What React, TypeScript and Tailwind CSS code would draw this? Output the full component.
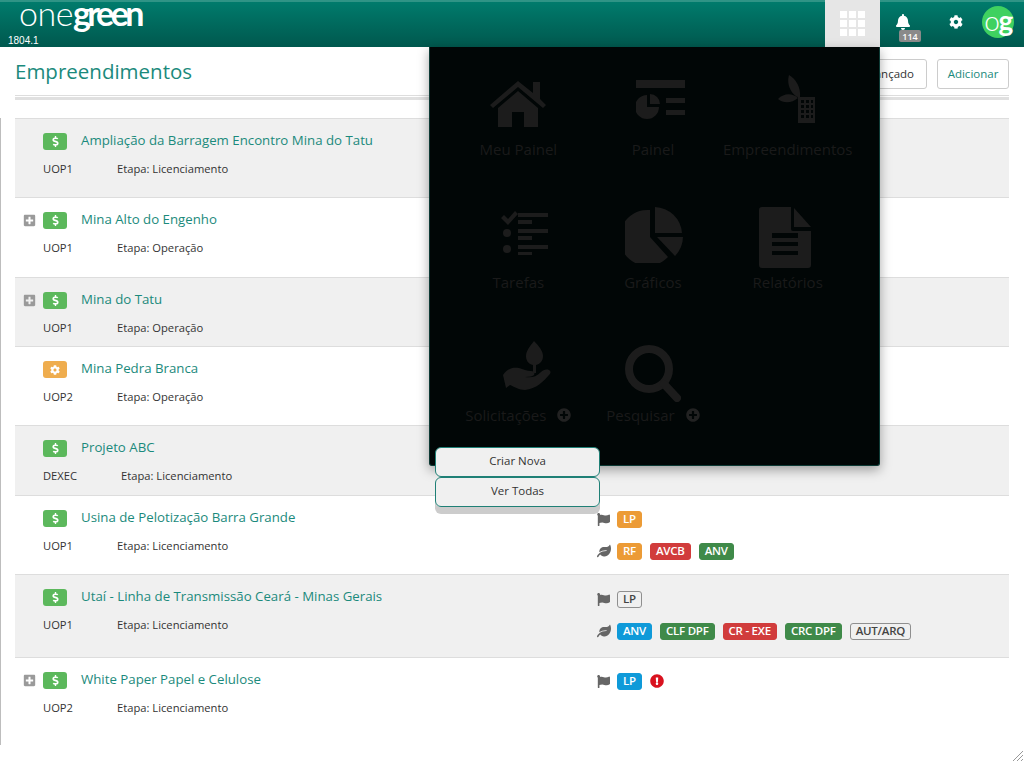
import { FaBell, FaCog, FaDollarSign, FaExclamationCircle, FaFlag, FaLeaf, FaPlusCircle, FaPlusSquare } from "react-icons/fa";

type Tag = { label: string; tone: "orange" | "red" | "green" | "blue" | "outline" };

type Row = {
  title: string;
  unit: string;
  stage: string;
  expand?: boolean;
  status?: "gear";
  height: string;
  flags?: Tag[];
  alert?: boolean;
  licenses?: Tag[];
  tall?: boolean;
};

const toneClass = {
  orange: "bg-[#ec9b36] text-white border-[#ec9b36]",
  red: "bg-[#d13c3c] text-white border-[#d13c3c]",
  green: "bg-[#3f8a49] text-white border-[#3f8a49]",
  blue: "bg-[#0f9ad9] text-white border-[#0f9ad9]",
  outline: "bg-transparent text-[#444] border-[#8f8f8f]",
};

const rows: Row[] = [
  { title: "Ampliação da Barragem Encontro Mina do Tatu", unit: "UOP1", stage: "Etapa: Licenciamento", height: "h-[79px]" },
  { title: "Mina Alto do Engenho", unit: "UOP1", stage: "Etapa: Operação", expand: true, height: "h-[80px]" },
  { title: "Mina do Tatu", unit: "UOP1", stage: "Etapa: Operação", expand: true, height: "h-[69px]" },
  { title: "Mina Pedra Branca", unit: "UOP2", stage: "Etapa: Operação", status: "gear", height: "h-[79px]" },
  { title: "Projeto ABC", unit: "DEXEC", stage: "Etapa: Licenciamento", height: "h-[70px]" },
  {
    title: "Usina de Pelotização Barra Grande",
    unit: "UOP1",
    stage: "Etapa: Licenciamento",
    height: "h-[79px]",
    flags: [{ label: "LP", tone: "orange" }],
    licenses: [
      { label: "RF", tone: "orange" },
      { label: "AVCB", tone: "red" },
      { label: "ANV", tone: "green" },
    ],
  },
  {
    title: "Utaí - Linha de Transmissão Ceará - Minas Gerais",
    unit: "UOP1",
    stage: "Etapa: Licenciamento",
    height: "h-[83px]",
    tall: true,
    flags: [{ label: "LP", tone: "outline" }],
    licenses: [
      { label: "ANV", tone: "blue" },
      { label: "CLF DPF", tone: "green" },
      { label: "CR - EXE", tone: "red" },
      { label: "CRC DPF", tone: "green" },
      { label: "AUT/ARQ", tone: "outline" },
    ],
  },
  {
    title: "White Paper Papel e Celulose",
    unit: "UOP2",
    stage: "Etapa: Licenciamento",
    expand: true,
    height: "h-[88px]",
    flags: [{ label: "LP", tone: "blue" }],
    alert: true,
  },
];

function Badge({ tag }: { tag: Tag }) {
  return (
    <span className={`flex h-[17px] items-center rounded-[3px] border px-[5px] text-[11.5px] leading-none font-semibold tracking-[-0.25px] ${toneClass[tag.tone]}`}>
      {tag.label}
    </span>
  );
}

function HomeIcon() {
  return (
    <svg viewBox="0 0 56 46" className="mt-[34px] h-[46px] w-[56px]" fill="#1c1c1c" aria-hidden="true">
      <path d="M28 0 43 12V1h7v17l6 6-3 3L28 6 3 27l-3-3z" />
      <path d="M28 10 48 27v19H34V31H22v15H8V27z" />
    </svg>
  );
}

function PanelIcon() {
  return (
    <svg viewBox="0 0 50 40" className="ml-[17px] mt-[33px] h-[40px] w-[50px]" fill="#1c1c1c" aria-hidden="true">
      <rect x="0" y="0" width="49" height="8" />
      <path d="M11 15v12h12a12 12 0 1 1-12-12z" />
      <path d="M14 14a10 10 0 0 1 10 10H14z" />
      <rect x="30" y="18" width="19" height="5" />
      <rect x="30" y="30" width="19" height="5" />
    </svg>
  );
}

function ProjectIcon() {
  return (
    <svg viewBox="0 0 38 48" className="ml-[18px] mt-[28px] h-[48px] w-[38px]" fill="#1c1c1c" aria-hidden="true">
      <path d="M11 0c7 4 12 12 11 23C14 21 8 10 11 0z" />
      <path d="M0 24c6-6 14-6 20-1-6 5-14 6-20 1z" />
      <path fillRule="evenodd" d="M20 22h17v26H20zm3 3v3h3v-3zm5 0v3h3v-3zm5 0v3h2v-3zm-10 5v3h3v-3zm5 0v3h3v-3zm5 0v3h2v-3zm-10 5v3h3v-3zm5 0v3h3v-3zm5 0v3h2v-3zm-10 5v3h3v-3zm5 0v3h3v-3zm5 0v3h2v-3z" />
    </svg>
  );
}

function TasksIcon() {
  return (
    <svg viewBox="0 0 48 44" className="ml-[14px] mt-[31px] h-[44px] w-[48px]" fill="#1c1c1c" aria-hidden="true">
      <path d="M0 7l3-3 4 4 7-8 3 3-10 11z" />
      <rect x="17" y="2" width="30" height="4" />
      <rect x="17" y="9" width="14" height="4" />
      <circle cx="6" cy="22" r="4" />
      <rect x="17" y="18" width="30" height="4" />
      <rect x="17" y="25" width="14" height="4" />
      <circle cx="6" cy="38" r="4" />
      <rect x="17" y="34" width="30" height="4" />
      <rect x="17" y="41" width="14" height="3" />
    </svg>
  );
}

function PieIcon() {
  return (
    <svg viewBox="0 0 58 56" className="ml-[2px] mt-[27px] h-[56px] w-[58px]" fill="#1c1c1c" aria-hidden="true">
      <path d="M25 3v27l18 20A28 28 0 1 1 25 3z" />
      <path d="M30 0a28 28 0 0 1 27 26H30z" />
      <path d="M32 30h26a28 28 0 0 1-8 19z" />
    </svg>
  );
}

function FileIcon() {
  return (
    <svg viewBox="0 0 52 61" className="mr-[6px] mt-[27px] h-[61px] w-[52px]" fill="#1c1c1c" aria-hidden="true">
      <path fillRule="evenodd" d="M3 0h29v22a2 2 0 0 0 2 2h18v34a3 3 0 0 1-3 3H3a3 3 0 0 1-3-3V3a3 3 0 0 1 3-3zm10 26v5h26v-5zm0 9v4h26v-4zm0 9v4h26v-4z" />
      <path d="M35 1l17 19H35z" />
    </svg>
  );
}

function SeedlingIcon() {
  return (
    <svg viewBox="0 0 48 49" className="ml-[18px] mt-[28px] h-[49px] w-[48px]" fill="#1c1c1c" aria-hidden="true">
      <path d="M31 0c5 5 9 10 9 15 0 5-3 8-7 9v8h-3v-8c-5-1-7-5-7-9 0-5 4-10 8-15z" />
      <path d="M0 34c5-7 10-8 16-7 4 1 8 3 12 3 3 0 4 2 3 4-1 1-4 2-9 2 6 1 11 0 16-5 2-2 5-3 8-2 2 1 2 3 0 5-5 6-13 14-24 15-6 0-10-3-15-5l-4 3z" />
    </svg>
  );
}

function SearchIcon() {
  return (
    <svg viewBox="0 0 56 57" className="mt-[32px] h-[57px] w-[56px]" fill="none" stroke="#1c1c1c" aria-hidden="true">
      <circle cx="24" cy="24" r="20" strokeWidth="8" />
      <path d="M39 39l13 14" strokeWidth="8" strokeLinecap="round" />
    </svg>
  );
}

function MenuTile({ icon, label, plus }: { icon: React.ReactNode; label: string; plus?: boolean }) {
  return (
    <div className="flex h-[133px] flex-col items-center">
      <div className="flex h-[92px] items-start justify-center">{icon}</div>
      <div className="flex items-center gap-[11px] text-[15px] leading-[20px] text-[#1a1a1a]">
        {label}
        {plus && <FaPlusCircle className="text-[14px] text-[#222]" />}
      </div>
    </div>
  );
}

export default function App() {
  return (
    <div className="relative h-[762px] w-[1024px] overflow-hidden bg-white font-['Open_Sans','Noto_Sans',sans-serif] text-[#333]">
      <header className="flex h-[47px] justify-between border-t-2 border-[#2f9486] bg-gradient-to-b from-[#007b6c] to-[#00584e]">
        <div className="relative w-[200px] pl-[19px]">
          <div className="mt-[1px] font-['Lato',sans-serif] text-[34px] leading-[20px] text-white">
            <span className="font-light tracking-[-0.5px]">one</span>
            <span className="font-bold tracking-[-3.5px]">green</span>
          </div>
          <span className="absolute bottom-0 left-[8px] font-['Liberation_Sans',sans-serif] text-[10px] leading-[13px] text-white">1804.1</span>
        </div>
        <div className="mt-[-2px] flex h-[47px]">
          <div className="grid h-[47px] w-[55px] grid-cols-[repeat(3,7px)] content-center justify-center gap-[2px] bg-[#e6e6e6]">
            {Array.from({ length: 9 }).map((_, i) => (
              <span key={i} className="h-[7px] w-[7px] bg-white" />
            ))}
          </div>
          <div className="relative w-[76px]">
            <FaBell className="absolute left-[15px] top-[14px] text-[16px] text-white" />
            <span className="absolute left-[19px] top-[30px] flex h-[12px] w-[22px] items-center justify-center rounded-[2px] bg-[#8a8a8a] text-[9px] font-semibold leading-none text-white">114</span>
            <FaCog className="absolute left-[69px] top-[15px] text-[14px] text-white" />
          </div>
          <div className="ml-[26px] mr-[10px] mt-[6px] flex h-[32px] w-[32px] items-center justify-center rounded-full bg-[#3fd160] pb-[4px] font-['Lato',sans-serif] text-[28px] leading-none tracking-[-1.5px] text-white">
            <span className="font-light">o</span>
            <span className="font-bold">g</span>
          </div>
        </div>
      </header>

      <div className="px-[15px]">
        <div className="flex h-[48px] items-center justify-between">
          <h1 className="text-[20.5px] leading-[30px] text-[#1b8a7c]">Empreendimentos</h1>
          <div className="mt-[5px] flex gap-[10px]">
            <button className="h-[30px] rounded-[3px] border border-[#ccc] px-[12px] pt-[1px] text-[11.5px] text-[#333]">Filtro Avançado</button>
            <button className="h-[30px] w-[72px] rounded-[3px] border border-[#ccc] pt-[1px] text-[11.5px] text-[#1b8a7c]">Adicionar</button>
          </div>
        </div>
        <div className="border-t border-[#ddd]" />
        <div className="mt-[1px] h-[3px] bg-[#e0e0e0]" />
      </div>

      <div className="ml-0 mt-[18px] border-l border-[#bdbdbd] pl-[14px] pr-[15px]">
        {rows.map((row, i) => (
          <div key={row.title} className={`flex border-t border-[#ddd] ${row.height} ${i % 2 === 0 ? "bg-[#f0f0f0]" : "bg-white"}`}>
            <div className="w-[582px] pt-[14px]">
              <div className="flex h-[17px] items-center">
                <div className="flex w-[28px] justify-start pl-[8px]">
                  {row.expand && <FaPlusSquare className="text-[13px] text-[#9a9a9a]" />}
                </div>
                <span className={`flex h-[17px] w-[24px] items-center justify-center rounded-[3px] text-[11px] text-white ${row.status === "gear" ? "bg-[#efad4e]" : "bg-[#5cb85c]"}`}>
                  {row.status === "gear" ? <FaCog className="text-[10px]" /> : <FaDollarSign className="text-[11px]" />}
                </span>
                <a className="mb-[2px] ml-[14px] text-[13.25px] leading-[17px] text-[#1b8a7c]">{row.title}</a>
              </div>
              <div className="mt-[11px] flex pl-[28px] text-[11.2px] leading-[16px] text-[#333]">
                <span className={row.unit === "DEXEC" ? "w-[78px]" : "w-[74px]"}>{row.unit}</span>
                <span>{row.stage}</span>
              </div>
            </div>
            <div className={row.tall ? "pt-[15px]" : "pt-[14px]"}>
              {row.flags && (
                <div className="flex h-[18px] items-center gap-[7px]">
                  <FaFlag className="text-[13px] text-[#666]" />
                  {row.flags.map((t) => <Badge key={t.label} tag={t} />)}
                  {row.alert && <FaExclamationCircle className="ml-[1px] text-[14px] text-[#d9121f]" />}
                </div>
              )}
              {row.licenses && (
                <div className="mt-[14px] flex h-[18px] items-center gap-[8px]">
                  <FaLeaf className="mr-[-2px] w-[14px] text-[14px] text-[#666]" />
                  {row.licenses.map((t) => <Badge key={t.label} tag={t} />)}
                </div>
              )}
            </div>
          </div>
        ))}
      </div>

      {/* App menu, open over the list */}
      <div className="absolute left-[429px] top-[47px] h-[419px] w-[451px] rounded-b-[3px] border-x border-b border-[#0d3a35] bg-[#010606] shadow-[0_4px_12px_rgba(0,0,0,0.35)]">
        <div className="ml-[21px] grid w-[404px] grid-cols-3">
          <MenuTile icon={<HomeIcon />} label="Meu Painel" />
          <MenuTile icon={<PanelIcon />} label="Painel" />
          <MenuTile icon={<ProjectIcon />} label="Empreendimentos" />
          <MenuTile icon={<TasksIcon />} label="Tarefas" />
          <MenuTile icon={<PieIcon />} label="Gráficos" />
          <MenuTile icon={<FileIcon />} label="Relatórios" />
          <MenuTile icon={<SeedlingIcon />} label="Solicitações" plus />
          <MenuTile icon={<SearchIcon />} label="Pesquisar" plus />
        </div>
      </div>

      <div className="absolute left-[435px] top-[447px] flex w-[165px] flex-col rounded-[6px] shadow-[0_7px_0_0_#ccc]">
        <button className="h-[30px] rounded-[6px] border border-[#1f8076] bg-[#f0f0f0] pb-[2px] text-[11.5px] text-[#333]">Criar Nova</button>
        <button className="h-[30px] rounded-[6px] border border-[#1f8076] bg-[#f0f0f0] pb-[2px] text-[11.5px] text-[#333]">Ver Todas</button>
      </div>

      <svg viewBox="0 0 14 10" className="absolute bottom-[1px] right-0 h-[10px] w-[14px]" stroke="#999" aria-hidden="true">
        <path d="M3 10 13 0M7 10l6-6M11 10l2-2" />
      </svg>
    </div>
  );
}
